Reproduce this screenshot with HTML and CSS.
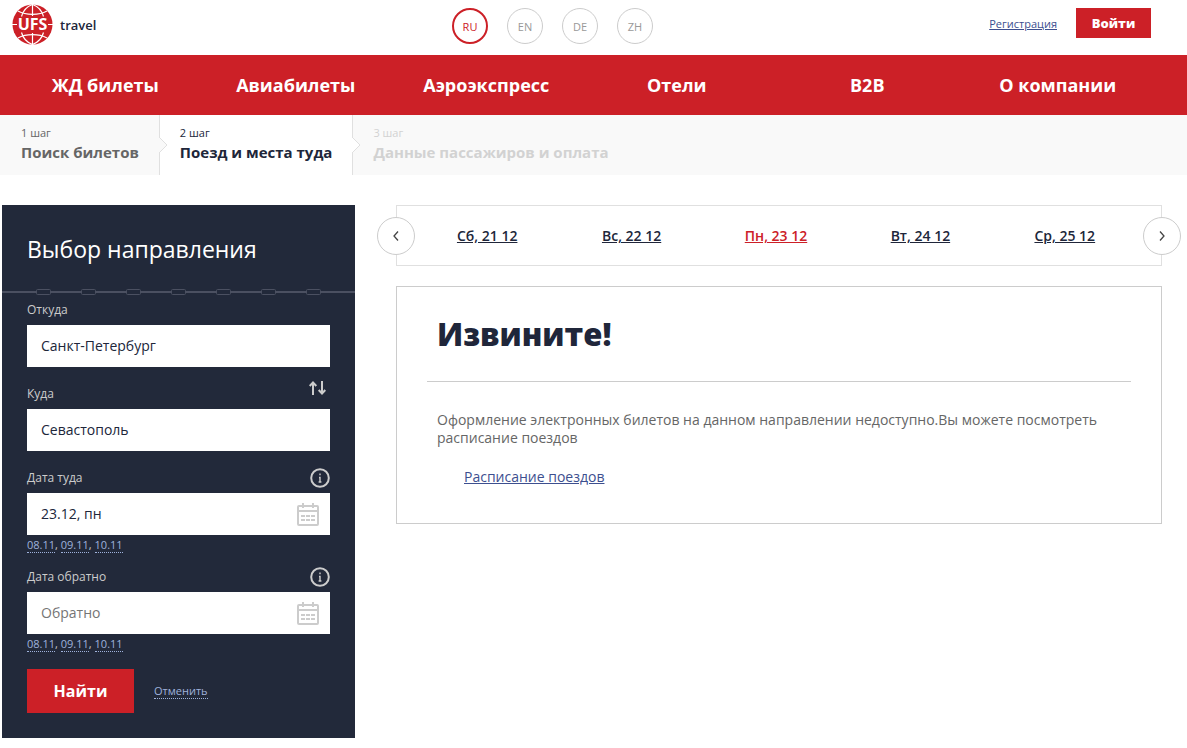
FILE: index.html
```html
<!DOCTYPE html>
<html lang="ru">
<head>
<meta charset="utf-8">
<title>UFS travel</title>
<meta name="viewport" content="width=device-width, initial-scale=1">
<link rel="stylesheet" href="styles.css">
</head>
<body>
<header class="header">
  <a class="brand" href="#">
    <svg class="brand-logo" width="41" height="41" viewBox="0 0 41 41" aria-hidden="true">
      <circle cx="20.500" cy="20.500" r="20" fill="#cc2027"/>
      <g fill="none" stroke="#fff" stroke-width="1.200">
        <path d="M20.500 0V12M20.500 29V41"/>
        <path d="M9.500 12.500C11 7 15 2.500 20.500 .5 26 2.500 30 7 31.500 12.500"/>
        <path d="M9.500 28.500C11 34 15 38.500 20.500 40.500 26 38.500 30 34 31.500 28.500"/>
        <path d="M6 7C14 11.500 27 11.500 35 7"/>
        <path d="M6 34C14 29.500 27 29.500 35 34"/>
        <path d="M0 20.500H5M36 20.500H41"/>
      </g>
      <text x="20.500" y="26" text-anchor="middle" class="brand-mark">UFS</text>
    </svg>
    <span class="brand-name">travel</span>
  </a>
  <nav class="langs" aria-label="Язык">
    <a class="lang lang-active" href="#">RU</a>
    <a class="lang" href="#">EN</a>
    <a class="lang" href="#">DE</a>
    <a class="lang" href="#">ZH</a>
  </nav>
  <div class="auth">
    <a class="register" href="#">Регистрация</a>
    <button class="login" type="button">Войти</button>
  </div>
</header>

<nav class="menu" aria-label="Разделы">
  <a href="#">ЖД билеты</a>
  <a href="#">Авиабилеты</a>
  <a href="#">Аэроэкспресс</a>
  <a href="#">Отели</a>
  <a href="#">B2B</a>
  <a href="#">О компании</a>
</nav>

<ol class="steps">
  <li class="step step-done"><span class="step-number">1 шаг</span><a class="step-name" href="#">Поиск билетов</a>
    <svg class="step-arrow" width="9" height="16" viewBox="0 0 9 16" aria-hidden="true"><path d="M0 0 8 8 0 16" fill="#f9f9f9" stroke="#e0e0e0"/></svg></li>
  <li class="step step-current"><span class="step-number">2 шаг</span><span class="step-name">Поезд и места туда</span>
    <svg class="step-arrow" width="9" height="16" viewBox="0 0 9 16" aria-hidden="true"><path d="M0 0 8 8 0 16" fill="#fff" stroke="#e0e0e0"/></svg></li>
  <li class="step step-next"><span class="step-number">3 шаг</span><span class="step-name">Данные пассажиров и оплата</span></li>
</ol>

<div class="page">
  <aside class="search">
    <h2 class="search-title">Выбор направления</h2>
    <svg class="track" width="353" height="6" viewBox="0 0 353 6" aria-hidden="true">
      <path d="M0 3H34M49 3H79M94 3H124M139 3H169M184 3H214M229 3H259M274 3H304M319 3H353" stroke="#4b5061" stroke-width="2"/>
      <g fill="none" stroke="#4b5061">
        <rect x="34.500" y=".5" width="14" height="5" rx="1"/><rect x="79.500" y=".5" width="14" height="5" rx="1"/>
        <rect x="124.500" y=".5" width="14" height="5" rx="1"/><rect x="169.500" y=".5" width="14" height="5" rx="1"/>
        <rect x="214.500" y=".5" width="14" height="5" rx="1"/><rect x="259.500" y=".5" width="14" height="5" rx="1"/>
        <rect x="304.500" y=".5" width="14" height="5" rx="1"/>
      </g>
    </svg>
    <form class="search-form">
      <div class="field">
        <div class="field-head"><label for="from">Откуда</label></div>
        <input id="from" type="text" value="Санкт-Петербург">
      </div>
      <div class="field">
        <div class="field-head"><label for="to">Куда</label>
          <button class="icon-button swap" type="button" aria-label="Поменять местами">
            <svg width="17" height="14" viewBox="0 0 17 14" fill="none" stroke="#ccc" stroke-width="2"><path d="M4 14V2M.7 5 4 1.500 7.300 5M13 0V12M9.700 9 13 12.500 16.300 9"/></svg>
          </button>
        </div>
        <input id="to" type="text" value="Севастополь">
      </div>
      <div class="field">
        <div class="field-head"><label for="there">Дата туда</label>
          <button class="icon-button" type="button" aria-label="Подсказка">
            <svg width="20" height="20" viewBox="0 0 20 20" fill="none" stroke="#ccc" stroke-width="2"><circle cx="10" cy="10" r="8.800"/><path d="M10 5.500V7.300M9 9.500H10V14M8.600 14H11.400" stroke-width="1.400"/></svg>
          </button>
        </div>
        <div class="date-box">
          <input id="there" type="text" value="23.12, пн">
          <svg class="calendar" width="22" height="23" viewBox="0 0 22 23" fill="none" stroke="#ccc" stroke-width="2" aria-hidden="true"><rect x="1" y="3" width="20" height="19" rx="1"/><path d="M1 8H21M6 0V5M16 0V5"/><path d="M4 13H18M4 17H18" stroke-dasharray="4 1"/></svg>
        </div>
        <p class="quick"><a href="#">08.11</a>, <a href="#">09.11</a>, <a href="#">10.11</a></p>
      </div>
      <div class="field field-back">
        <div class="field-head"><label for="back">Дата обратно</label>
          <button class="icon-button" type="button" aria-label="Подсказка">
            <svg width="20" height="20" viewBox="0 0 20 20" fill="none" stroke="#ccc" stroke-width="2"><circle cx="10" cy="10" r="8.800"/><path d="M10 5.500V7.300M9 9.500H10V14M8.600 14H11.400" stroke-width="1.400"/></svg>
          </button>
        </div>
        <div class="date-box">
          <input id="back" type="text" placeholder="Обратно">
          <svg class="calendar" width="22" height="23" viewBox="0 0 22 23" fill="none" stroke="#ccc" stroke-width="2" aria-hidden="true"><rect x="1" y="3" width="20" height="19" rx="1"/><path d="M1 8H21M6 0V5M16 0V5"/><path d="M4 13H18M4 17H18" stroke-dasharray="4 1"/></svg>
        </div>
        <p class="quick"><a href="#">08.11</a>, <a href="#">09.11</a>, <a href="#">10.11</a></p>
      </div>
      <div class="actions">
        <button class="submit" type="submit">Найти</button>
        <a class="cancel" href="#">Отменить</a>
      </div>
    </form>
  </aside>

  <main class="main">
    <nav class="dates" aria-label="Даты">
      <button class="dates-arrow dates-prev" type="button" aria-label="Назад"><svg width="6" height="10" viewBox="0 0 6 10" fill="none" stroke="#444" stroke-width="1.300"><path d="M5 .5 1 5 5 9.500"/></svg></button>
      <a href="#">Сб, 21 12</a>
      <a href="#">Вс, 22 12</a>
      <a class="date-active" href="#">Пн, 23 12</a>
      <a href="#">Вт, 24 12</a>
      <a href="#">Ср, 25 12</a>
      <button class="dates-arrow dates-next" type="button" aria-label="Вперёд"><svg width="6" height="10" viewBox="0 0 6 10" fill="none" stroke="#444" stroke-width="1.300"><path d="M1 .5 5 5 1 9.500"/></svg></button>
    </nav>
    <section class="notice">
      <h1 class="notice-title">Извините!</h1>
      <p class="notice-text">Оформление электронных билетов на данном направлении недоступно.Вы можете посмотреть расписание поездов</p>
      <a class="notice-link" href="#">Расписание поездов</a>
    </section>
  </main>
</div>
</body>
</html>
```
FILE: styles.css
```css
* { box-sizing: border-box; }

body {
  margin: 0;
  background: #fff;
  color: #20263a;
  font-family: "Open Sans", "Noto Sans", sans-serif;
  font-size: 14px;
}

button, input { font-family: inherit; border: 0; border-radius: 0; }
button { cursor: pointer; }
h1, h2, p, ol { margin: 0; padding: 0; }

.header {
  display: flex;
  align-items: flex-start;
  min-height: 55px;
  padding: 4px 36px 0 12px;
}
.brand {
  flex: 0 0 440px;
  display: flex;
  align-items: center;
  gap: 7px;
  color: #20263a;
  text-decoration: none;
}
.brand-logo { display: block; }
.brand-mark { fill: #fff; font-size: 16px; font-weight: 700; }
.brand-name { font-size: 13px; font-weight: 600; }

.langs { display: flex; gap: 19px; padding-top: 4px; }
.lang {
  display: flex;
  align-items: center;
  justify-content: center;
  width: 36px;
  height: 36px;
  border: 1px solid #ccc;
  border-radius: 50%;
  color: #999;
  font-size: 11px;
  text-decoration: none;
}
.lang-active { border: 2px solid #cc2027; color: #cc2027; }

.auth { display: flex; align-items: center; gap: 19px; margin-left: auto; padding-top: 4px; }
.register { color: #3d4f8f; font-size: 11px; }
.login {
  width: 75px;
  height: 30px;
  padding: 0;
  background: #cc2027;
  color: #fff;
  font-size: 13px;
  font-weight: 800;
}

.menu {
  display: grid;
  grid-template-columns: repeat(6, 1fr);
  padding: 0 34px 0 10px;
  background: #cc2027;
}
.menu a {
  color: #fff;
  font-size: 18px;
  font-weight: 700;
  line-height: 60px;
  text-align: center;
  text-decoration: none;
}

.steps { display: flex; background: #f9f9f9; list-style: none; }
.step {
  position: relative;
  display: flex;
  flex-direction: column;
  height: 60px;
  padding: 11px 20px 0;
  border-right: 1px solid #e0e0e0;
}
.step:first-child { padding-left: 21px; }
.step:last-child { border-right: 0; }
.step-number { font-size: 11px; line-height: 14px; }
.step-name { color: inherit; font-size: 15px; font-weight: 700; line-height: 24px; text-decoration: none; }
.step-done { color: #666; }
.step-current { background: #fff; }
.step-next { color: #d2d2d2; }
.step-arrow { position: absolute; z-index: 1; top: 22px; right: -9px; }

.page { display: flex; align-items: flex-start; gap: 41px; padding: 30px 25px 10px 2px; }

.search { flex: 0 0 353px; background: #22293a; color: #ccc; }
.search-title { padding: 4px 25px 0; color: #fff; font-size: 23px; font-weight: 500; line-height: 80px; }
.track { display: block; width: 100%; }
.search-form { padding: 0 25px 25px; }
.field + .field { margin-top: 12px; }
.field + .field-back { margin-top: 7px; }
.field-head {
  display: flex;
  align-items: center;
  justify-content: space-between;
  height: 30px;
  padding-bottom: 1px;
  font-size: 12px;
  font-weight: 500;
}
.field input {
  display: block;
  width: 100%;
  height: 42px;
  padding: 0 14px 2px;
  background: #fff;
  color: #20263a;
  font-size: 14px;
}
.field input::placeholder { color: #757575; opacity: 1; }
.icon-button { display: flex; padding: 0; background: none; }
.swap { align-self: flex-start; margin: 2px 4px 0 0; }
.date-box { position: relative; }
.calendar { position: absolute; top: 10px; right: 11px; }
.quick { font-size: 11px; line-height: 20px; }
.quick a, .cancel { color: #9fb2dc; text-decoration: none; border-bottom: 1px dotted #9fb2dc; }
.actions { display: flex; align-items: center; gap: 20px; margin-top: 15px; }
.submit { width: 107px; height: 44px; background: #cc2027; color: #fff; font-size: 16px; font-weight: 700; }
.cancel { font-size: 11px; line-height: 14px; }

.main { flex: 1; min-width: 0; }
.dates {
  position: relative;
  display: grid;
  grid-template-columns: repeat(5, 1fr);
  padding: 0 24px 0 18px;
  border: 1px solid #e0e0e0;
}
.dates a { color: #20263a; font-size: 14px; font-weight: 600; line-height: 59px; text-align: center; }
.dates .date-active { color: #cc2027; }
.dates-arrow {
  position: absolute;
  top: 11px;
  display: flex;
  align-items: center;
  justify-content: center;
  width: 38px;
  height: 38px;
  padding: 0;
  border: 1px solid #ccc;
  border-radius: 50%;
  background: #fff;
}
.dates-prev { left: -20px; }
.dates-next { right: -20px; }

.notice { margin-top: 20px; padding: 0 30px 37px; border: 1px solid #ccc; }
.notice-title { padding-left: 10px; border-bottom: 1px solid #ccc; font-size: 31px; font-weight: 800; line-height: 94px; }
.notice-text { margin: 29px 10px 21px; color: #666; line-height: 18px; }
.notice-link { display: block; width: fit-content; margin-left: 37px; color: #3d4f8f; line-height: 18px; }
```
